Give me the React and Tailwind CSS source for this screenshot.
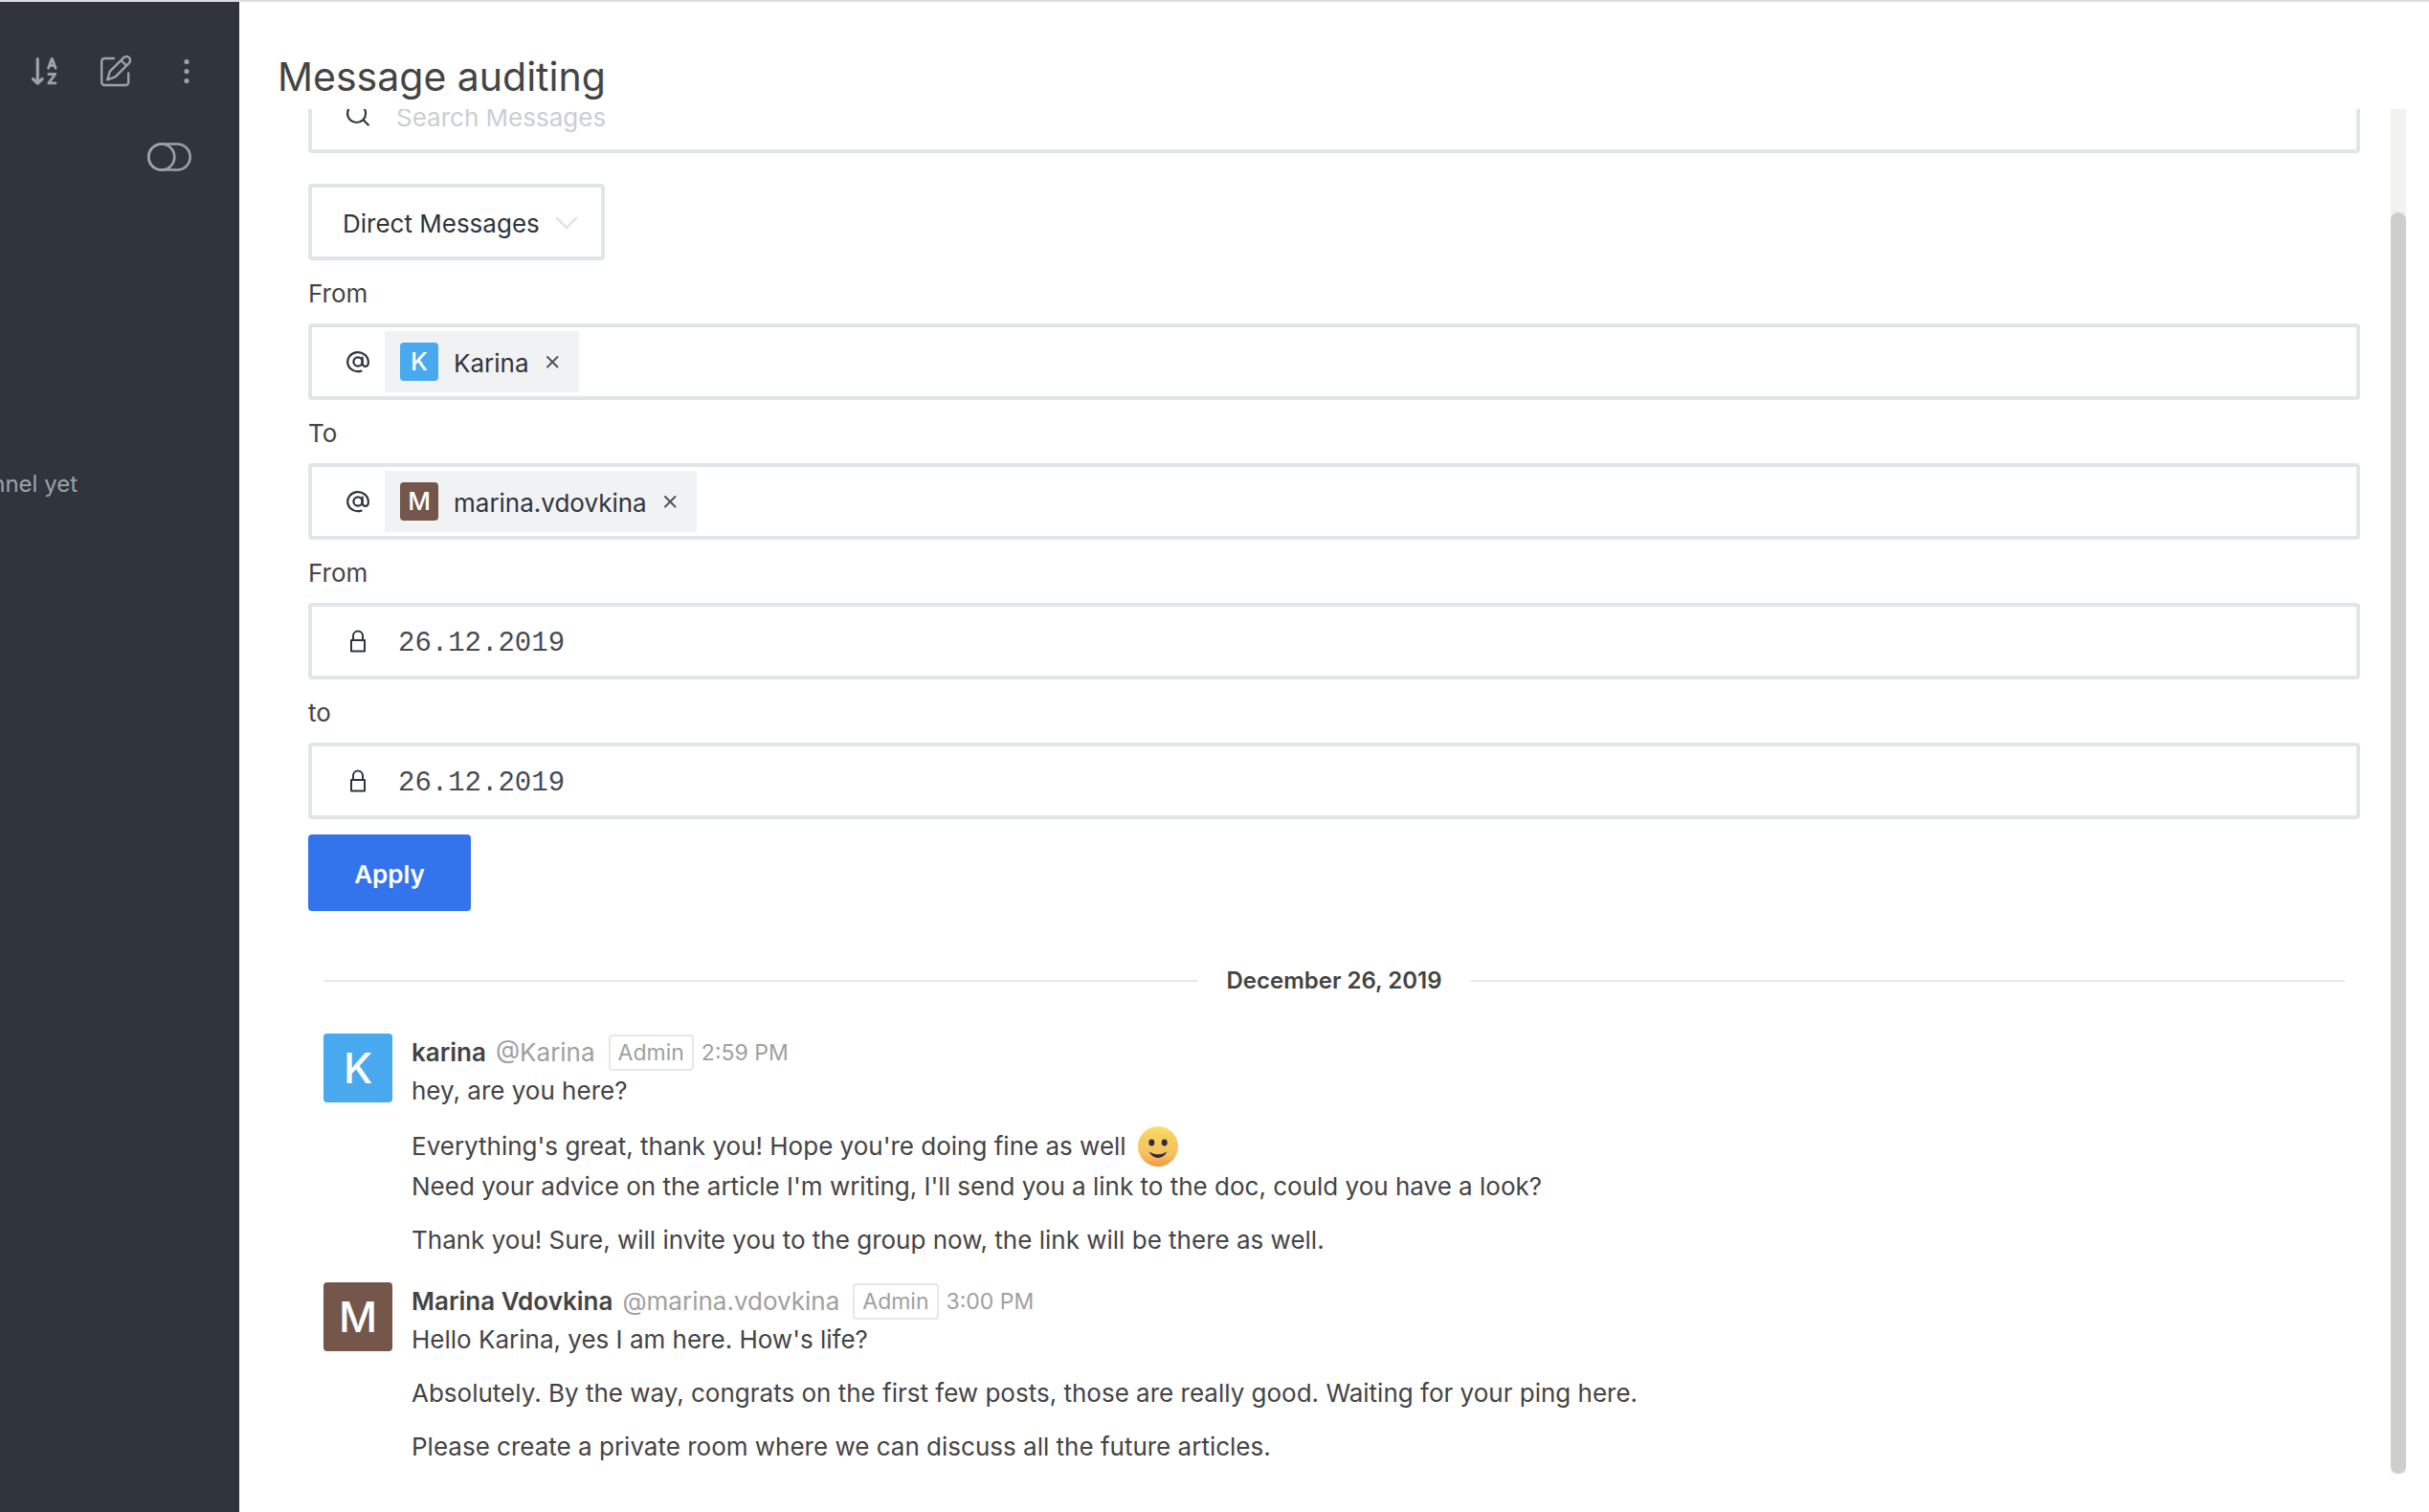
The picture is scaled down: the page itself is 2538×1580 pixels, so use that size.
import React from "react";

const icon = { fill: "none", stroke: "currentColor", strokeLinecap: "round", strokeLinejoin: "round" };

function SortIcon() {
  return (
    <svg viewBox="0 0 40 40" className="size-10" {...icon} strokeWidth="3.2">
      <path d="M12.300 7.500v25M7.500 28.500l4.800 4.500 4.800-4.500" />
      <path strokeWidth="2.800" d="M23.500 17.300l3.600-9.800h.4l3.600 9.800M24.700 14.500h5.200M23.800 23.500h7l-7 9.300h7.200" />
    </svg>
  );
}

function ComposeIcon() {
  return (
    <svg viewBox="0 0 40 40" className="size-10" {...icon} strokeWidth="2.400">
      <path d="M18 7H8.200a3 3 0 0 0-3 3v22a3 3 0 0 0 3 3h22a3 3 0 0 0 3-3V22.500" />
      <path d="M11.200 29.300l2.600-8.600L28.300 6.200a3.900 3.900 0 0 1 5.600 5.600L19.400 26.300zM25.500 9l5.600 5.600" />
    </svg>
  );
}

function KebabIcon() {
  return (
    <svg viewBox="0 0 40 40" className="size-10" fill="currentColor">
      <circle cx="20" cy="10.500" r="2.600" />
      <circle cx="20" cy="20.500" r="2.600" />
      <circle cx="20" cy="30.500" r="2.600" />
    </svg>
  );
}

function ToggleIcon() {
  return (
    <svg viewBox="0 0 48 32" className="h-8 w-12" {...icon} strokeWidth="2.600">
      <rect x="2.300" y="2.500" width="43.400" height="27" rx="13.500" />
      <circle cx="15.800" cy="16" r="13.500" />
    </svg>
  );
}

function SearchIcon() {
  return (
    <svg viewBox="0 0 24 24" className="size-6" {...icon} strokeWidth="2.200">
      <circle cx="10.600" cy="10.500" r="9.500" />
      <path d="M17.800 17.500l5 5" />
    </svg>
  );
}

function AtIcon() {
  return (
    <svg viewBox="0 0 24 24" className="size-6" {...icon} strokeWidth="2.200">
      <circle cx="12" cy="12" r="4.600" />
      <path d="M16.600 7.500v6.200a3 3 0 0 0 6.200 0V12A10.800 10 0 1 0 15.500 21.600" />
    </svg>
  );
}

function LockIcon() {
  return (
    <svg viewBox="0 0 24 24" className="size-6" {...icon} strokeWidth="2">
      <rect x="5" y="11" width="14" height="11.500" />
      <path d="M7 11V6.500a5 5 0 0 1 10 0V11" />
    </svg>
  );
}

function Smile() {
  return (
    <svg viewBox="0 0 42 42" className="ml-3 size-[42px]" role="img" aria-label="slightly smiling face">
      <defs>
        <linearGradient id="face" x1="0" y1="0" x2="0" y2="1">
          <stop offset="0" stopColor="#f8e070" />
          <stop offset=".25" stopColor="#f7cf5c" />
          <stop offset=".7" stopColor="#f6c062" />
          <stop offset="1" stopColor="#f09a42" />
        </linearGradient>
      </defs>
      <circle cx="21" cy="21" r="21" fill="url(#face)" />
      <ellipse cx="14.300" cy="17" rx="3" ry="3.400" fill="#302c3b" />
      <ellipse cx="27.700" cy="17" rx="3" ry="3.400" fill="#302c3b" />
      <path d="M11.500 26.500q9.500 5.500 19 0q-3.500 6.500-9.500 6.500t-9.500-6.500z" fill="#302c3b" />
    </svg>
  );
}

const box = "flex h-20 items-center rounded border-4 border-[#e1e5e8] bg-white";

function Chip({ letter, color, name }) {
  return (
    <span className="flex h-16 items-center bg-[#f1f2f4] px-4">
      <span className={`flex size-10 items-center justify-center rounded text-[26px] font-medium text-white ${color}`}>{letter}</span>
      <span className="pt-1 pl-4">{name}</span>
      <button type="button" aria-label={`Remove ${name}`} className="ml-3 flex size-6 items-center justify-center text-[#4f545c]">
        <svg viewBox="0 0 24 24" className="size-6" {...icon} strokeWidth="2">
          <path d="M7 7l10.500 10.500M17.500 7L7 17.500" />
        </svg>
      </button>
    </span>
  );
}

function UserField({ id, label, chip }) {
  return (
    <div>
      <label htmlFor={id} className="flex h-[66px] items-center pt-1 text-[#444]">{label}</label>
      <div className={box}>
        <span className="pr-4 pl-9"><AtIcon /></span>
        <Chip {...chip} />
        <input id={id} type="text" className="h-full min-w-0 flex-1 outline-none" />
      </div>
    </div>
  );
}

function DateField({ id, label }) {
  return (
    <div>
      <label htmlFor={id} className="flex h-[66px] items-center pt-1 text-[#444]">{label}</label>
      <div className={box}>
        <span className="pr-[30px] pl-9"><LockIcon /></span>
        <input id={id} type="text" defaultValue="26.12.2019" className="h-full min-w-0 flex-1 pt-1 font-['Liberation_Mono',monospace] text-[29px] text-[#444b55] outline-none" />
      </div>
    </div>
  );
}

function Message({ letter, color, name, handle, time, children }) {
  return (
    <li className="flex gap-5 pb-6">
      <span className={`flex size-[72px] shrink-0 items-center justify-center rounded text-[44px] font-medium text-white ${color}`}>{letter}</span>
      <div className="flex flex-col gap-4">
        <div>
          <div className="flex h-10 items-center">
            <span className="font-semibold">{name}</span>
            <span className="ml-2.5 text-[#a0a0a0]">{handle}</span>
            <span className="ml-3.5 flex h-[38px] items-center rounded border-2 border-[#e6e7e9] px-2 text-[23px] text-[#a0a0a0]">Admin</span>
            <time className="ml-2 text-[23px] text-[#a0a0a0]">{time}</time>
          </div>
          {children[0]}
        </div>
        {children.slice(1)}
      </div>
    </li>
  );
}

export default function App() {
  return (
    <div className="flex h-screen overflow-hidden border-t-2 border-[#dcdce0] bg-white font-['Inter',sans-serif] text-[26px] leading-10 text-[#444]">
      <aside className="flex w-[250px] shrink-0 flex-col overflow-hidden bg-[#2f343d] text-[#9ea2a8]">
        <div className="flex justify-end gap-[34px] pt-[52px] pr-[35px]">
          <button type="button" aria-label="Sort"><SortIcon /></button>
          <button type="button" aria-label="Create new"><ComposeIcon /></button>
          <button type="button" aria-label="Menu"><KebabIcon /></button>
        </div>
        <div className="flex justify-end pt-[54px] pr-[49px]">
          <button type="button" aria-label="Toggle"><ToggleIcon /></button>
        </div>
        <p className="mt-[306px] flex w-[81px] justify-end text-2xl leading-10 whitespace-nowrap">channel yet</p>
      </aside>
      <main className="flex min-w-0 flex-1 flex-col pb-10">
        <h1 className="flex h-28 shrink-0 items-end pb-1.5 pl-10 text-[41px] leading-[56px] font-normal">Message auditing</h1>
        <div className="flex min-h-0 flex-1">
          <div className="min-w-0 flex-1 overflow-hidden pr-8 pl-[72px]">
            <form className="-mt-[34px] text-[#2f343d]" onSubmit={(e) => e.preventDefault()}>
              <div className={box}>
                <label htmlFor="search" aria-label="Search Messages" className="pr-7 pl-9"><SearchIcon /></label>
                <input id="search" type="text" placeholder="Search Messages" className="h-full min-w-0 flex-1 pt-1 outline-none placeholder:text-[#cbced1]" />
              </div>
              <div className={`${box} relative mt-8 w-[310px]`}>
                <select aria-label="Message type" className="h-full w-full appearance-none pt-1 pl-8 outline-none">
                  <option>Direct Messages</option>
                </select>
                <svg viewBox="0 0 24 24" className="pointer-events-none absolute right-6 size-6 text-[#e1e5e8]" {...icon} strokeWidth="2.600">
                  <path d="M2 8l10 10L22 8" />
                </svg>
              </div>
              <UserField id="from-user" label="From" chip={{ letter: "K", color: "bg-[#48a9ee]", name: "Karina" }} />
              <UserField id="to-user" label="To" chip={{ letter: "M", color: "bg-[#74564a]", name: "marina.vdovkina" }} />
              <DateField id="from-date" label="From" />
              <DateField id="to-date" label="to" />
              <button type="submit" className="mt-4 h-20 w-[170px] rounded bg-[#3374ed] pt-1 font-semibold text-white">Apply</button>
            </form>
            <section className="px-4 pt-[52px]">
              <div className="flex h-[42px] items-center">
                <span className="h-0.5 flex-1 bg-[#e8e8e8]" />
                <h2 className="px-[30px] text-[24px] leading-10 font-semibold">December 26, 2019</h2>
                <span className="h-0.5 flex-1 bg-[#e8e8e8]" />
              </div>
              <ul className="pt-[34px]">
                <Message letter="K" color="bg-[#48a9ee]" name="karina" handle="@Karina" time="2:59 PM">
                  <p key="a">hey, are you here?</p>
                  <div key="b">
                    <p className="flex h-11 items-center">Everything's great, thank you! Hope you're doing fine as well <Smile /></p>
                    <p>Need your advice on the article I'm writing, I'll send you a link to the doc, could you have a look?</p>
                  </div>
                  <p key="c">Thank you! Sure, will invite you to the group now, the link will be there as well.</p>
                </Message>
                <Message letter="M" color="bg-[#74564a]" name="Marina Vdovkina" handle="@marina.vdovkina" time="3:00 PM">
                  <p key="a">Hello Karina, yes I am here. How's life?</p>
                  <p key="b">Absolutely. By the way, congrats on the first few posts, those are really good. Waiting for your ping here.</p>
                  <p key="c">Please create a private room where we can discuss all the future articles.</p>
                </Message>
              </ul>
            </section>
          </div>
          <div className="mr-6 flex w-4 flex-col bg-[#f2f2f1] pt-[108px]">
            <span className="flex-1 rounded-full bg-[#cececd]" />
          </div>
        </div>
      </main>
    </div>
  );
}
